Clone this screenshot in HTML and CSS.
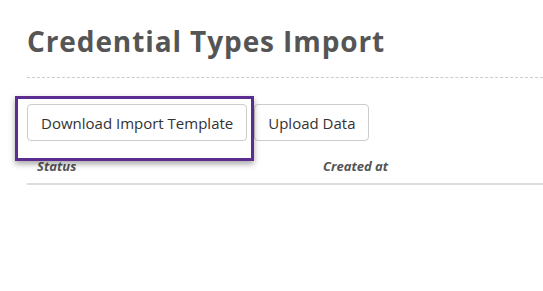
FILE: index.html
```html
<!DOCTYPE html>
<html lang="en">
<head>
    <meta charset="UTF-8">
    <meta name="viewport" content="width=device-width, initial-scale=1.0">
    <title>Credential Types Import</title>
    <link rel="stylesheet" href="styles.css">
</head>
<body>
    <div class="page">
        <h1>Credential Types Import</h1>

        <div class="actions">
            <button class="btn">Download Import Template</button>
            <button class="btn">Upload Data</button>
            <div class="highlight"></div>
        </div>

        <div class="table-head">
            <div class="col">Status</div>
            <div class="col">Created at</div>
        </div>
    </div>
</body>
</html>
```

FILE: styles.css
```css
body {
    font-family: "Open Sans", sans-serif;
    margin: 0;
    padding: 0;
    background-color: white;
    color: #333;
}
.page {
    padding: 21px 0 0 27px;
}
h1 {
    margin: 0;
    font-size: 28px;
    font-weight: bold;
    letter-spacing: 0.9px;
    color: #555;
    line-height: 40px;
    padding-bottom: 16px;
    border-bottom: 1px dashed #ccc;
}
.actions {
    position: relative;
    display: flex;
    gap: 7px;
    margin-top: 26px;
}
.btn {
    font-family: inherit;
    font-size: 15px;
    color: #333;
    background-color: white;
    border: 1px solid #ccc;
    border-radius: 4px;
    height: 37px;
    padding: 0 13px;
}
.highlight {
    position: absolute;
    left: -12px;
    top: -8px;
    width: 233px;
    height: 59px;
    border: 3px solid #5c2d91;
    box-shadow: 0 3px 6px rgba(0, 0, 0, 0.35);
}
.table-head {
    display: flex;
    margin-top: 14px;
    border-bottom: 2px solid #ddd;
    font-size: 13px;
    font-weight: bold;
    font-style: italic;
    color: #555;
}
.col {
    padding: 2px 10px 8px;
}
.col:first-child {
    width: 266px;
}
```
